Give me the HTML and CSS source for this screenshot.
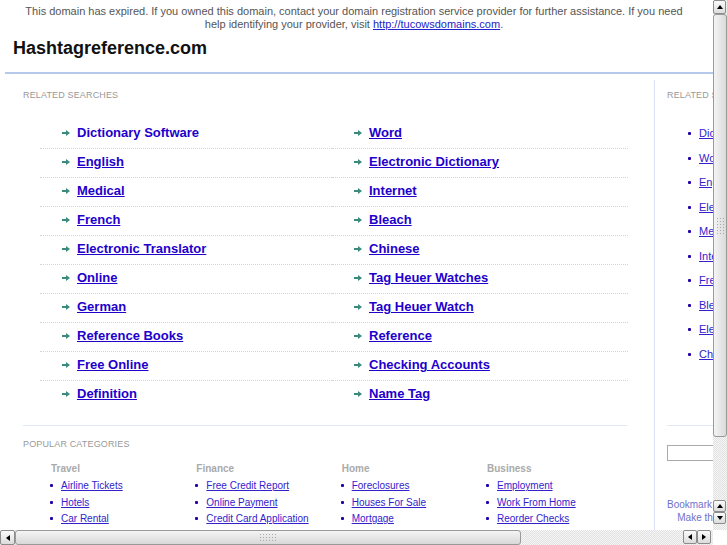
FILE: index.html
```html
<!DOCTYPE html>
<html lang="en">
<head>
<meta charset="utf-8">
<title>Hashtagreference.com</title>
<link rel="stylesheet" href="styles.css">
</head>
<body>
<div class="page">
  <div class="notice">This domain has expired. If you owned this domain, contact your domain registration service provider for further assistance. If you need help identifying your provider, visit <a href="#">http://tucowsdomains.com</a>.</div>
  <div class="header"><h1 class="title">Hashtagreference.com</h1></div>
  <div class="main">
    <div class="content">
      <div class="label">Related Searches</div>
      <ul class="searches">
        <li><svg class="arrow" viewBox="0 0 8 6"><polygon points="0,2 4,2 4,0 8,3 4,6 4,4 0,4"/></svg><a class="plain" href="#">Dictionary Software</a></li>
        <li><svg class="arrow" viewBox="0 0 8 6"><polygon points="0,2 4,2 4,0 8,3 4,6 4,4 0,4"/></svg><a href="#">Word</a></li>
        <li><svg class="arrow" viewBox="0 0 8 6"><polygon points="0,2 4,2 4,0 8,3 4,6 4,4 0,4"/></svg><a href="#">English</a></li>
        <li><svg class="arrow" viewBox="0 0 8 6"><polygon points="0,2 4,2 4,0 8,3 4,6 4,4 0,4"/></svg><a href="#">Electronic Dictionary</a></li>
        <li><svg class="arrow" viewBox="0 0 8 6"><polygon points="0,2 4,2 4,0 8,3 4,6 4,4 0,4"/></svg><a href="#">Medical</a></li>
        <li><svg class="arrow" viewBox="0 0 8 6"><polygon points="0,2 4,2 4,0 8,3 4,6 4,4 0,4"/></svg><a href="#">Internet</a></li>
        <li><svg class="arrow" viewBox="0 0 8 6"><polygon points="0,2 4,2 4,0 8,3 4,6 4,4 0,4"/></svg><a href="#">French</a></li>
        <li><svg class="arrow" viewBox="0 0 8 6"><polygon points="0,2 4,2 4,0 8,3 4,6 4,4 0,4"/></svg><a href="#">Bleach</a></li>
        <li><svg class="arrow" viewBox="0 0 8 6"><polygon points="0,2 4,2 4,0 8,3 4,6 4,4 0,4"/></svg><a href="#">Electronic Translator</a></li>
        <li><svg class="arrow" viewBox="0 0 8 6"><polygon points="0,2 4,2 4,0 8,3 4,6 4,4 0,4"/></svg><a href="#">Chinese</a></li>
        <li><svg class="arrow" viewBox="0 0 8 6"><polygon points="0,2 4,2 4,0 8,3 4,6 4,4 0,4"/></svg><a href="#">Online</a></li>
        <li><svg class="arrow" viewBox="0 0 8 6"><polygon points="0,2 4,2 4,0 8,3 4,6 4,4 0,4"/></svg><a href="#">Tag Heuer Watches</a></li>
        <li><svg class="arrow" viewBox="0 0 8 6"><polygon points="0,2 4,2 4,0 8,3 4,6 4,4 0,4"/></svg><a href="#">German</a></li>
        <li><svg class="arrow" viewBox="0 0 8 6"><polygon points="0,2 4,2 4,0 8,3 4,6 4,4 0,4"/></svg><a href="#">Tag Heuer Watch</a></li>
        <li><svg class="arrow" viewBox="0 0 8 6"><polygon points="0,2 4,2 4,0 8,3 4,6 4,4 0,4"/></svg><a href="#">Reference Books</a></li>
        <li><svg class="arrow" viewBox="0 0 8 6"><polygon points="0,2 4,2 4,0 8,3 4,6 4,4 0,4"/></svg><a href="#">Reference</a></li>
        <li><svg class="arrow" viewBox="0 0 8 6"><polygon points="0,2 4,2 4,0 8,3 4,6 4,4 0,4"/></svg><a href="#">Free Online</a></li>
        <li><svg class="arrow" viewBox="0 0 8 6"><polygon points="0,2 4,2 4,0 8,3 4,6 4,4 0,4"/></svg><a href="#">Checking Accounts</a></li>
        <li class="last"><svg class="arrow" viewBox="0 0 8 6"><polygon points="0,2 4,2 4,0 8,3 4,6 4,4 0,4"/></svg><a href="#">Definition</a></li>
        <li class="last"><svg class="arrow" viewBox="0 0 8 6"><polygon points="0,2 4,2 4,0 8,3 4,6 4,4 0,4"/></svg><a href="#">Name Tag</a></li>
      </ul>
      <div class="rule"></div>
      <div class="label label-pop">Popular Categories</div>
      <div class="cats">
        <div class="cat">
          <div class="cat-title">Travel</div>
          <ul class="cat-list">
            <li><a href="#">Airline Tickets</a></li>
            <li><a href="#">Hotels</a></li>
            <li><a href="#">Car Rental</a></li>
          </ul>
        </div>
        <div class="cat">
          <div class="cat-title">Finance</div>
          <ul class="cat-list">
            <li><a href="#">Free Credit Report</a></li>
            <li><a href="#">Online Payment</a></li>
            <li><a href="#">Credit Card Application</a></li>
          </ul>
        </div>
        <div class="cat">
          <div class="cat-title">Home</div>
          <ul class="cat-list">
            <li><a href="#">Foreclosures</a></li>
            <li><a href="#">Houses For Sale</a></li>
            <li><a href="#">Mortgage</a></li>
          </ul>
        </div>
        <div class="cat">
          <div class="cat-title">Business</div>
          <ul class="cat-list">
            <li><a href="#">Employment</a></li>
            <li><a href="#">Work From Home</a></li>
            <li><a href="#">Reorder Checks</a></li>
          </ul>
        </div>
      </div>
    </div>
    <div class="sidebar">
      <div class="label">Related Searches</div>
      <ul class="side-list">
        <li><a href="#">Dictionary Software</a></li>
        <li><a href="#">Word</a></li>
        <li><a href="#">English</a></li>
        <li><a href="#">Electronic Dictionary</a></li>
        <li><a href="#">Medical</a></li>
        <li><a href="#">Internet</a></li>
        <li><a href="#">French</a></li>
        <li><a href="#">Bleach</a></li>
        <li><a href="#">Electronic Translator</a></li>
        <li><a href="#">Chinese</a></li>
      </ul>
      <div class="side-rule"></div>
      <input class="search-box" type="text">
      <div class="bookmark">
        <div>Bookmark this page</div>
        <div>Make this page</div>
      </div>
    </div>
  </div>
</div>

<div class="vscroll">
  <div class="sb-btn"><span class="tri-up"></span></div>
  <div class="vthumb"><span class="grip grip-v"></span></div>
  <div class="sb-fill"></div>
  <div class="sb-btn sb-small"><span class="tri-up"></span></div>
  <div class="sb-btn sb-small"><span class="tri-down"></span></div>
  <div class="sb-end"></div>
</div>
<div class="hscroll">
  <div class="sb-btn sb-h"><span class="tri-left"></span></div>
  <div class="hthumb"><span class="grip grip-h"></span></div>
  <div class="sb-fill"></div>
  <div class="sb-btn sb-h sb-hs"><span class="tri-left"></span></div>
  <div class="sb-btn sb-h sb-hs"><span class="tri-right"></span></div>
  <div class="sb-end-h"></div>
</div>
</body>
</html>
```

FILE: styles.css
```css
html, body {
  margin: 0;
  padding: 0;
  background: #fff;
  overflow: hidden;
  height: 100%;
}
body {
  font-family: "Liberation Sans", Arial, sans-serif;
  color: #333;
}
ul { list-style: none; margin: 0; padding: 0; }

.page {
  width: 860px;
}

.notice {
  width: 670px;
  padding: 5px 0 0 19px;
  font-size: 11px;
  line-height: 13px;
  color: #555;
  text-align: center;
}
.notice a { color: #2222cc; text-decoration: underline; }

.header {
  margin-left: 5px;
  padding: 6px 0 13px 8px;
  border-bottom: 2px solid #b6c9ea;
}
.title {
  margin: 0;
  font-size: 18px;
  line-height: 22px;
  font-weight: bold;
  color: #111;
}

.main {
  display: flex;
  margin: 6px 0 0 5px;
  height: 540px;
}
.content {
  width: 631px;
  padding: 9px 0 0 18px;
  border-right: 1px solid #d9e3f5;
}
.label {
  font-size: 9px;
  line-height: 12px;
  letter-spacing: 0.15px;
  text-transform: uppercase;
  color: #999;
}

.searches {
  display: grid;
  grid-template-columns: 292px 296px;
  margin: 19px 0 0 17px;
}
.searches li {
  box-sizing: border-box;
  display: flex;
  align-items: center;
  height: 29px;
  padding: 0 0 2px 22px;
  border-bottom: 1px dotted #c6d6ef;
  white-space: nowrap;
}
.searches li.last { border-bottom: none; height: 28px; padding-bottom: 2px; }
.arrow {
  display: block;
  flex: none;
  width: 8px;
  height: 6px;
  margin-right: 7px;
  fill: #3b8b7c;
}
.searches a {
  font-size: 13px;
  line-height: 16px;
  font-weight: bold;
  color: #2200cc;
  text-decoration: underline;
}
.searches a.plain { text-decoration: none; }

.rule {
  width: 604px;
  margin-top: 16px;
  border-top: 1px solid #dfe8f4;
}
.label-pop { margin-top: 12px; }

.cats {
  display: grid;
  grid-template-columns: repeat(4, 145.33px);
  margin: 12px 0 0 27px;
}
.cat-title {
  padding-left: 1px;
  font-size: 10px;
  font-weight: bold;
  line-height: 13px;
  color: #aaa;
}
.cat-list { margin-top: 3px; }
.cat-list li {
  font-size: 10px;
  line-height: 16.5px;
  white-space: nowrap;
}
.cat-list li::before,
.side-list li::before {
  content: "";
  display: inline-block;
  width: 3px;
  height: 3px;
  border-radius: 1px;
  background: #2200aa;
  margin-right: 8px;
  vertical-align: 2px;
}
.cat-list a {
  color: #3322cc;
  text-decoration: underline;
}

.sidebar {
  width: 170px;
  padding: 9px 0 0 12px;
}
.side-list {
  margin-top: 20px;
  padding-left: 21px;
}
.side-list li {
  font-size: 11px;
  line-height: 24.5px;
  white-space: nowrap;
}
.side-list a { color: #3322cc; text-decoration: underline; }
.side-rule {
  width: 150px;
  margin-top: 59px;
  border-top: 1px solid #dfe8f4;
}
.search-box {
  display: block;
  box-sizing: border-box;
  width: 140px;
  height: 16px;
  margin: 19px 0 0;
  padding: 0;
  border: 1px solid #aaa;
  background: #fff;
}
.bookmark {
  display: inline-block;
  margin-top: 37px;
  font-size: 10px;
  line-height: 13px;
  color: #7070cc;
  text-align: center;
}

/* Scrollbars (overlays) */
.vscroll {
  position: fixed;
  left: 713px;
  top: 0;
  width: 14px;
  height: 530px;
  display: flex;
  flex-direction: column;
  background: repeating-conic-gradient(#e2e2e2 0 25%, #f5f5f5 0 50%) 0 0 / 2px 2px;
}
.hscroll {
  position: fixed;
  left: 0;
  top: 530px;
  width: 713px;
  height: 15px;
  display: flex;
  background: repeating-conic-gradient(#e2e2e2 0 25%, #f5f5f5 0 50%) 0 0 / 2px 2px;
}
.sb-btn {
  box-sizing: border-box;
  flex: none;
  width: 13px;
  height: 14px;
  border: 1px solid #8c8c8c;
  border-radius: 2px;
  background: linear-gradient(#fbfbfb, #dcdcdc);
  display: flex;
  align-items: center;
  justify-content: center;
}
.sb-small { height: 12px; }
.sb-h { width: 15px; height: 15px; }
.sb-hs { width: 14px; height: 14px; }
.sb-fill { flex: 1; }
.sb-end { height: 6px; flex: none; }
.sb-end-h { width: 2px; flex: none; }
.vthumb {
  box-sizing: border-box;
  flex: none;
  height: 423px;
  width: 14px;
  border: 1px solid #9a9a9a;
  border-radius: 3px;
  background: linear-gradient(to right, #f4f4f4, #dadada);
  display: flex;
  align-items: center;
  justify-content: center;
}
.hthumb {
  box-sizing: border-box;
  flex: none;
  width: 506px;
  height: 15px;
  border: 1px solid #9a9a9a;
  border-radius: 3px;
  background: linear-gradient(#f4f4f4, #d8d8d8);
  display: flex;
  align-items: center;
  justify-content: center;
}
.grip {
  display: block;
  background: radial-gradient(circle, #aaa 0.6px, transparent 0.9px) 0 0 / 3px 3px;
}
.grip-v { width: 9px; height: 18px; }
.grip-h { width: 18px; height: 9px; }
.tri-up, .tri-down, .tri-left, .tri-right { width: 0; height: 0; display: block; }
.tri-up { border-left: 3px solid transparent; border-right: 3px solid transparent; border-bottom: 4px solid #000; }
.tri-down { border-left: 3px solid transparent; border-right: 3px solid transparent; border-top: 4px solid #000; }
.tri-left { border-top: 3px solid transparent; border-bottom: 3px solid transparent; border-right: 4px solid #000; }
.tri-right { border-top: 3px solid transparent; border-bottom: 3px solid transparent; border-left: 4px solid #000; }
```
